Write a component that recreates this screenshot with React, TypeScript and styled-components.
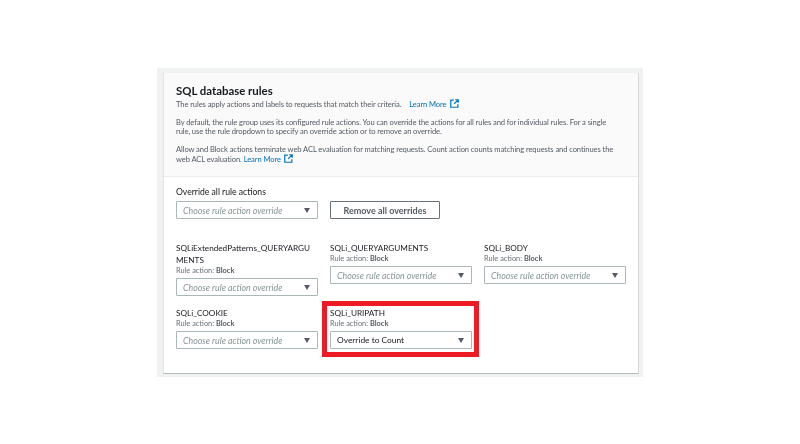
import React from "react";
import styled, { createGlobalStyle } from "styled-components";

const GlobalStyle = createGlobalStyle`
  html, body {
    margin: 0;
    padding: 0;
    background: #ffffff;
    font-family: "Lato", "Noto Sans", sans-serif;
  }
`;

const Page = styled.div`
  width: 800px;
  height: 444px;
  padding: 68px 157px 0 157px;
  box-sizing: border-box;
  overflow: hidden;
  filter: blur(0.3px);
`;

const Frame = styled.div`
  height: 309px;
  padding: 5px 4px 3px 6px;
  box-sizing: border-box;
  background: #f0f1f1;
`;

const Card = styled.div`
  height: 301px;
  background: #ffffff;
  box-sizing: border-box;
  border-left: 1px solid #e2e4e4;
  border-right: 1px solid #d5d9d9;
  border-bottom: 1px solid #b4bcbc;
`;

const Header = styled.div`
  height: 104px;
  padding: 9px 12px 0;
  box-sizing: border-box;
  background: #fafafa;
  border-bottom: 1px solid #eaeded;
`;

const Title = styled.h2`
  margin: 0;
  font-size: 11.4px;
  line-height: 17px;
  font-weight: 700;
  color: #16191f;
`;

const Paragraph = styled.p`
  max-width: 442px;
  margin: 0 0 9px;
  font-size: 7.6px;
  line-height: 9px;
  letter-spacing: -0.1px;
  color: #545b64;
`;

const LearnMore = styled.a<{ $gap?: boolean }>`
  color: #0073bb;
  margin-left: ${(p) => (p.$gap ? "6px" : "0")};
`;

const External = styled.svg`
  width: 9px;
  height: 9px;
  margin-left: 3px;
  vertical-align: -1.5px;
`;

const Body = styled.div`
  padding: 9px 12px 0;
`;

const FieldLabel = styled.div`
  font-size: 8.6px;
  line-height: 12px;
  color: #16191f;
  margin-bottom: 3px;
`;

const OverrideRow = styled.div`
  display: flex;
  align-items: center;
  gap: 12px;
  margin-bottom: 23px;
`;

const Select = styled.div<{ $filled?: boolean }>`
  width: 142px;
  height: 18px;
  padding: 0 7px 0 6px;
  box-sizing: border-box;
  display: flex;
  align-items: center;
  justify-content: space-between;
  background: #ffffff;
  border: 1px solid #aab7b8;
  border-radius: 1px;
  font-size: ${(p) => (p.$filled ? "8.4px" : "8.8px")};
  font-style: ${(p) => (p.$filled ? "normal" : "italic")};
  color: ${(p) => (p.$filled ? "#16191f" : "#879596")};
`;

const Caret = styled.span`
  width: 0;
  height: 0;
  border-left: 3.5px solid transparent;
  border-right: 3.5px solid transparent;
  border-top: 5px solid #545b64;
`;

const Button = styled.div`
  width: 110px;
  height: 18px;
  display: flex;
  align-items: center;
  justify-content: center;
  box-sizing: border-box;
  background: #ffffff;
  border: 1px solid #687078;
  border-radius: 1px;
  font-size: 9px;
  font-weight: 700;
  color: #545b64;
`;

const RuleGrid = styled.div`
  display: grid;
  grid-template-columns: repeat(3, 142px);
  column-gap: 12px;
  row-gap: 11px;
  align-items: start;
`;

const Rule = styled.div`
  position: relative;
`;

const RuleName = styled.div`
  font-size: 8.2px;
  line-height: 12px;
  color: #16191f;
`;

const RuleAction = styled.div`
  font-size: 7.4px;
  line-height: 10px;
  color: #687078;
  margin-bottom: 2px;

  b {
    color: #545b64;
  }
`;

const Highlight = styled.div`
  position: absolute;
  left: -8px;
  right: -7px;
  top: -6px;
  bottom: -8px;
  border: 5.5px solid #ed1c24;
  pointer-events: none;
`;

const rules = [
  { name: "SQLiExtendedPatterns_QUERYARGU\u200BMENTS" },
  { name: "SQLi_QUERYARGUMENTS" },
  { name: "SQLi_BODY" },
  { name: "SQLi_COOKIE" },
  { name: "SQLi_URIPATH", value: "Override to Count" },
];

const ExternalIcon = () => (
  <External viewBox="0 0 12 12" fill="none">
    <path d="M5 1.5H1v9.5h9.5V7" stroke="#0073bb" strokeWidth="1.6" />
    <path d="M7 1h4v4M11 1L5.5 6.5" stroke="#0073bb" strokeWidth="1.6" />
  </External>
);

const App: React.FC = () => {
  return (
    <Page>
      <GlobalStyle />
      <Frame>
        <Card>
          <Header>
            <Title>SQL database rules</Title>
            <Paragraph>
              The rules apply actions and labels to requests that match their criteria.
              <LearnMore $gap> Learn More</LearnMore>
              <ExternalIcon />
            </Paragraph>
            <Paragraph>
              By default, the rule group uses its configured rule actions. You can override the
              actions for all rules and for individual rules. For a single rule, use the rule
              dropdown to specify an override action or to remove an override.
            </Paragraph>
            <Paragraph>
              Allow and Block actions terminate web ACL evaluation for matching requests. Count
              action counts matching requests and continues the web ACL evaluation.{" "}
              <LearnMore>Learn More</LearnMore>
              <ExternalIcon />
            </Paragraph>
          </Header>
          <Body>
            <FieldLabel>Override all rule actions</FieldLabel>
            <OverrideRow>
              <Select>
                Choose rule action override
                <Caret />
              </Select>
              <Button>Remove all overrides</Button>
            </OverrideRow>
            <RuleGrid>
              {rules.map((rule) => (
                <Rule key={rule.name}>
                  <RuleName>{rule.name}</RuleName>
                  <RuleAction>
                    Rule action: <b>Block</b>
                  </RuleAction>
                  <Select $filled={!!rule.value}>
                    {rule.value ?? "Choose rule action override"}
                    <Caret />
                  </Select>
                  {rule.value && <Highlight />}
                </Rule>
              ))}
            </RuleGrid>
          </Body>
        </Card>
      </Frame>
    </Page>
  );
};

export default App;
